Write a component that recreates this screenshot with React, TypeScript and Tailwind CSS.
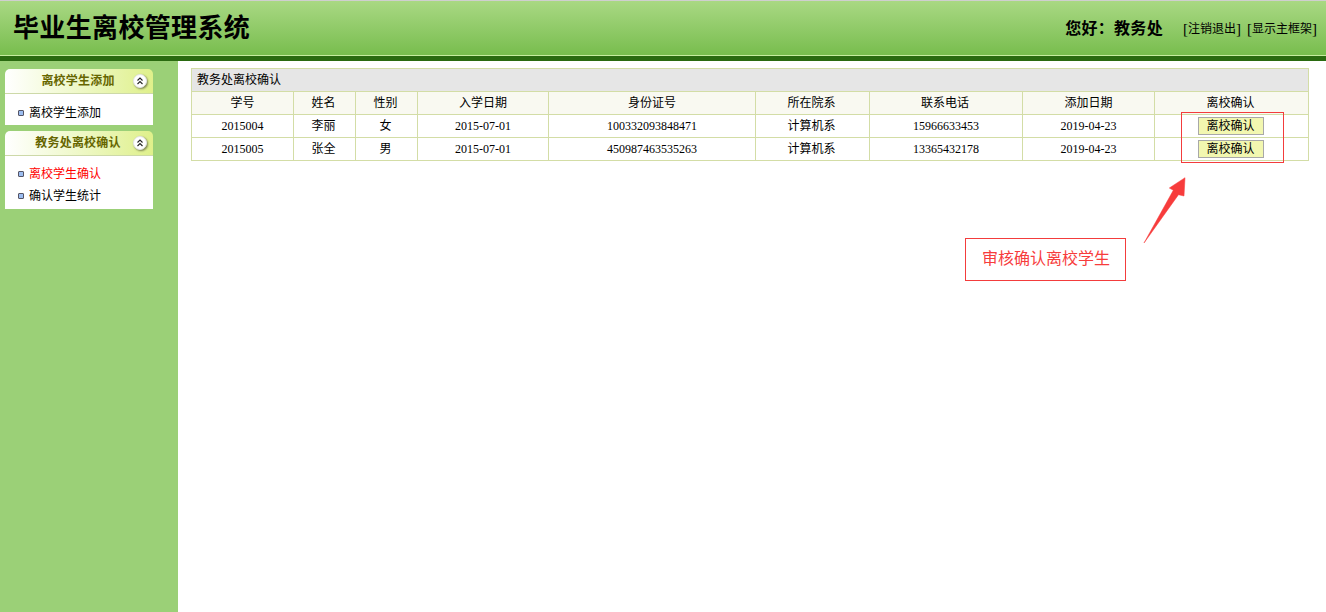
const serif = "font-['Liberation_Serif','Noto_Sans_CJK_SC',serif]";

const rows = [
  ["2015004", "李丽", "女", "2015-07-01", "100332093848471", "计算机系", "15966633453", "2019-04-23"],
  ["2015005", "张全", "男", "2015-07-01", "450987463535263", "计算机系", "13365432178", "2019-04-23"],
];
const heads = ["学号", "姓名", "性别", "入学日期", "身份证号", "所在院系", "联系电话", "添加日期", "离校确认"];
const widths = ["w-[102px]", "w-[62px]", "w-[62px]", "w-[131px]", "w-[207px]", "w-[114px]", "w-[153px]", "w-[132px]", "w-[154px]"];
const headNudged = [1, 2, 5, 6, 8];
const bodyNudged = [1, 2, 5];

function Toggle() {
  return (
    <span className="absolute right-[6px] top-[5px] flex h-[14px] w-[14px] items-center justify-center rounded-full border border-[#e4e4e4] bg-white shadow-[1px_1px_2px_rgba(0,0,0,0.45)]">
      <svg width="8" height="8" viewBox="0 0 8 8" fill="none" stroke="#222" strokeWidth="1.1">
        <path d="M1.5 3.5 4 1l2.5 2.5M1.5 7 4 4.5 6.5 7" />
      </svg>
    </span>
  );
}

function Bullet() {
  return <span className="mr-[5px] inline-block h-[6px] w-[6px] shrink-0 rounded-[1px] border border-[#556] bg-[#9cbdf0]" />;
}

function Panel({ title, bodyClass, items }: { title: string; bodyClass: string; items: { label: string; red?: boolean }[] }) {
  return (
    <div className="mb-[6px] w-[148px]">
      <div className="relative flex h-[25px] items-center justify-center rounded-t-[5px] border-b border-[#cdd9a8] bg-gradient-to-r from-white to-[#dff08a] pr-[2px] text-[12px] font-bold tracking-[0.2px] text-[#666600]">
        {title}
        <Toggle />
      </div>
      <div className={`bg-white px-[13px] ${bodyClass}`}>
        {items.map((it) => (
          <div key={it.label} className={`flex h-[22px] items-center text-[12px] ${it.red ? "text-[#ff0000]" : "text-black"}`}>
            <Bullet />
            {it.label}
          </div>
        ))}
      </div>
    </div>
  );
}

function Link({ label }: { label: string }) {
  return (
    <span className="ml-[6px] flex items-center text-[12px] text-black">
      <span className="text-[15px] leading-none">[</span>
      {label}
      <span className="text-[15px] leading-none">]</span>
    </span>
  );
}

export default function App() {
  const cell = "border border-[#d3dda6] p-0 text-center font-normal text-[12px] h-[23px] text-black";
  return (
    <div className={`relative flex h-[612px] w-[1326px] flex-col overflow-hidden bg-white ${serif}`}>
      <header className="flex h-[61px] shrink-0 items-center justify-between border-t border-[#cfcfcf] border-b-[5px] border-b-[#2a6a10] bg-gradient-to-b from-[#a9d883] to-[#77bd4c] pl-[13px] pr-[9px] shadow-[inset_0_-1px_0_#c5ec9e]">
        <h1 className="text-[26px] font-bold leading-none tracking-[0.35px] text-black">毕业生离校管理系统</h1>
        <div className="flex items-center">
          <span className="mr-[14px] text-[16px] font-bold tracking-[0.3px] text-black">您好：教务处</span>
          <div className="flex items-center pt-[1px]">
            <Link label="注销退出" />
            <Link label="显示主框架" />
          </div>
        </div>
      </header>
      <div className="flex flex-1">
        <aside className="w-[178px] shrink-0 bg-[#9bd077] pl-[5px] pt-[8px]">
          <Panel title="离校学生添加" bodyClass="pt-[8px] pb-[1px]" items={[{ label: "离校学生添加" }]} />
          <Panel title="教务处离校确认" bodyClass="pt-[7px] pb-[2px]" items={[{ label: "离校学生确认", red: true }, { label: "确认学生统计" }]} />
        </aside>
        <main className="flex-1 pl-[13px] pr-[17px] pt-[7px]">
          <table className="w-[1118px] table-fixed border-collapse">
            <colgroup>
              {widths.map((w, i) => (
                <col key={i} className={w} />
              ))}
            </colgroup>
            <thead>
              <tr>
                <th colSpan={9} className="h-[23px] border border-[#d3dda6] bg-[#e6e6e6] pl-[5px] text-left text-[12px] font-normal text-black">教务处离校确认</th>
              </tr>
              <tr className="bg-[#f9f9f1]">
                {heads.map((h, i) => (
                  <th key={h} className={`${cell} ${headNudged.includes(i) ? "pr-[2px]" : ""}`}>{h}</th>
                ))}
              </tr>
            </thead>
            <tbody>
              {rows.map((r) => (
                <tr key={r[0]}>
                  {r.map((c, i) => (
                    <td key={i} className={`${cell} ${bodyNudged.includes(i) ? "pr-[2px]" : ""}`}>{c}</td>
                  ))}
                  <td className={`${cell} pr-[2px]`}>
                    <button className="mx-auto block h-[18px] w-[66px] border border-[#a8a8a8] bg-[#f2f7b0] text-[12px] leading-none text-black">离校确认</button>
                  </td>
                </tr>
              ))}
            </tbody>
          </table>
        </main>
      </div>

      {/* annotation overlays */}
      <div className="absolute left-[1181px] top-[112px] h-[51px] w-[103px] border border-[#f33c3c]" />
      <svg className="absolute left-[1140px] top-[175px]" width="50" height="72" viewBox="0 0 50 72">
        <path d="M4 68 L33.3 15.3 L29.3 13 L45 2.7 L44 21 L38.5 19.7 Z" fill="#f73c3c" stroke="#f73c3c" strokeWidth="0.5" strokeLinejoin="round" />
      </svg>
      <div className="absolute left-[965px] top-[238px] flex h-[43px] w-[161px] items-center justify-center border border-[#f33c3c] pb-[2px] pl-[1px] text-[16px] text-[#f73c3c]">审核确认离校学生</div>
    </div>
  );
}
